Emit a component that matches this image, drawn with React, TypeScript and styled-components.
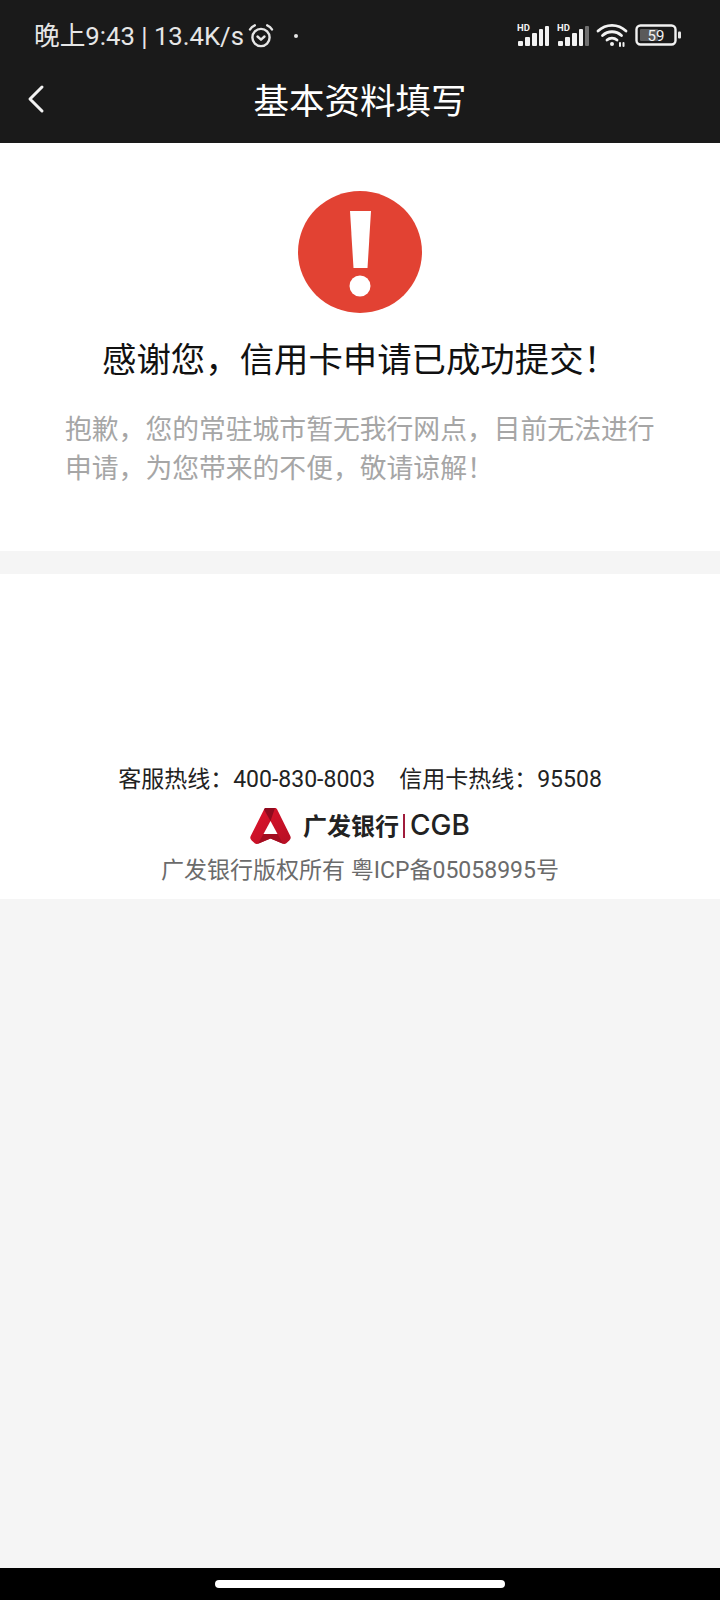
import React from 'react';
import styled, { createGlobalStyle } from 'styled-components';

const GlobalStyle = createGlobalStyle`
  html, body {
    margin: 0;
    padding: 0;
    background: #f5f5f5;
  }
  * {
    box-sizing: border-box;
  }
`;

const Page = styled.div`
  width: 720px;
  height: 1600px;
  display: flex;
  flex-direction: column;
  background: #f5f5f5;
  font-family: 'Roboto', 'Noto Sans CJK SC', sans-serif;
`;

const Header = styled.header`
  height: 143px;
  flex: none;
  background: #1a1a1a;
  color: #f2f2f2;
`;

const StatusBar = styled.div`
  height: 71px;
  display: flex;
  align-items: center;
  justify-content: space-between;
  padding: 0 39px 0 34px;
`;

const StatusLeft = styled.div`
  display: flex;
  align-items: center;
  font-size: 25.7px;
  line-height: 30px;
  color: #e6e6e6;
  white-space: nowrap;
`;

const AlarmWrap = styled.span`
  display: flex;
  margin-left: 4px;
`;

const Dot = styled.span`
  width: 4px;
  height: 4px;
  border-radius: 50%;
  background: #e6e6e6;
  margin-left: 20px;
`;

const StatusRight = styled.div`
  display: flex;
  align-items: center;
  gap: 7px;
  margin-bottom: 2px;
`;

const SignalPair = styled.div`
  display: flex;
  gap: 8px;
`;

const NavRow = styled.div`
  position: relative;
  height: 56px;
  display: flex;
  align-items: center;
  justify-content: center;
`;

const BackButton = styled.span`
  position: absolute;
  left: 26px;
  top: 12px;
  display: flex;
`;

const Title = styled.h1`
  margin: 0;
  font-size: 35.5px;
  line-height: 56px;
  font-weight: 400;
  color: #ffffff;
  font-family: 'Noto Sans CJK SC', sans-serif;
`;

const Result = styled.section`
  height: 408px;
  flex: none;
  background: #ffffff;
  display: flex;
  flex-direction: column;
  align-items: center;
  padding-top: 48px;
`;

const ResultTitle = styled.h2`
  margin: 20px 0 0;
  font-size: 34.4px;
  line-height: 48px;
  font-weight: 400;
  color: #111111;
  font-family: 'Noto Sans CJK SC', sans-serif;
  white-space: nowrap;
`;

const ResultText = styled.p`
  margin: 27px 0 0;
  width: 590px;
  font-size: 26.8px;
  line-height: 39px;
  color: #a6a6a6;
  font-family: 'Noto Sans CJK SC', sans-serif;
`;

const Footer = styled.footer`
  margin-top: 23px;
  height: 325px;
  flex: none;
  background: #ffffff;
  display: flex;
  flex-direction: column;
  align-items: center;
  justify-content: flex-end;
  padding-bottom: 11px;
`;

const Hotlines = styled.div`
  display: flex;
  gap: 24px;
  font-size: 23px;
  line-height: 34px;
  color: #222222;
  white-space: nowrap;
`;

const Brand = styled.div`
  display: flex;
  align-items: center;
  height: 42px;
  margin-top: 8px;
`;

const BrandName = styled.span`
  margin: -4px 0 0 12px;
  font-size: 24px;
  font-weight: 700;
  color: #222222;
  font-family: 'Noto Sans CJK SC', sans-serif;
`;

const BrandRule = styled.span`
  width: 2px;
  height: 24px;
  margin: 0 5px 0 4px;
  background: #a01c3c;
`;

const BrandCode = styled.span`
  margin-top: -3px;
  font-size: 28px;
  font-weight: 500;
  color: #222222;
  font-family: 'Inter', sans-serif;
`;

const Copyright = styled.div`
  margin-top: 7px;
  font-size: 23px;
  line-height: 34px;
  color: #6b6b6b;
  white-space: nowrap;
`;

const Spacer = styled.div`
  flex: 1;
`;

const HomeBar = styled.div`
  height: 32px;
  flex: none;
  background: #000000;
  display: flex;
  justify-content: center;
  padding-top: 12px;
`;

const HomePill = styled.span`
  width: 290px;
  height: 8px;
  border-radius: 4px;
  background: #ffffff;
`;

const AlarmIcon = () => (
  <svg width="26" height="26" viewBox="0 0 26 26" fill="none" stroke="#e6e6e6" strokeWidth="2.4" strokeLinecap="round" strokeLinejoin="round">
    <circle cx="13" cy="14.5" r="8.6" />
    <path d="M9.5 13.5l3.5 3.2 3.5-3.2" />
    <path d="M2 6.5c1-2 2.6-3.4 4.8-4.2M24 6.5c-1-2-2.6-3.4-4.8-4.2" />
  </svg>
);

const SignalIcon = ({ dim }: { dim?: boolean }) => (
  <svg width="32" height="24" viewBox="0 0 32 24" fill="#f2f2f2">
    <text x="0" y="8" fontSize="9.5" fontWeight="700" fontFamily="Roboto, sans-serif">HD</text>
    <rect x="1" y="18" width="5" height="5" rx="1" />
    <rect x="8" y="14" width="5" height="9" rx="1" />
    <rect x="15" y="10" width="5" height="13" rx="1" />
    <rect x="22" y="6" width="4" height="17" rx="1" />
    <rect x="28" y="3" width="4" height="20" rx="1" opacity={dim ? 0.4 : 1} />
  </svg>
);

const WifiIcon = () => (
  <svg width="32" height="24" viewBox="0 0 32 24" fill="none" stroke="#f2f2f2" strokeWidth="2.8" strokeLinecap="round">
    <path d="M2 8c8-7.5 20-7.500 28 0" />
    <path d="M6.500 12.500c5.500-5 13.500-5 19 0" />
    <path d="M11 17c2.800-2.500 7.200-2.500 10 0" />
    <circle cx="16" cy="21" r="2" fill="#f2f2f2" stroke="none" />
    <path d="M24 20v3M27.500 20v3" strokeWidth="2" />
  </svg>
);

const BatteryIcon = () => (
  <svg width="46" height="22" viewBox="0 0 46 22">
    <rect x="1.500" y="1.500" width="39" height="19" rx="4" fill="none" stroke="#f2f2f2" strokeWidth="2.400" />
    <rect x="5" y="5" width="18" height="12" rx="1" fill="#5a5a5a" />
    <rect x="43" y="7.500" width="3" height="7" rx="1" fill="#e6e6e6" />
    <text x="21" y="16.500" fontSize="15" textAnchor="middle" fill="#f2f2f2" fontFamily="Roboto, sans-serif">59</text>
  </svg>
);

const BackIcon = () => (
  <svg width="20" height="32" viewBox="0 0 20 32" fill="none" stroke="#f2f2f2" strokeWidth="3" strokeLinecap="round" strokeLinejoin="round">
    <path d="M16 4L4 16l12 12" />
  </svg>
);

const WarningIcon = () => (
  <svg width="124" height="122" viewBox="0 0 124 122">
    <ellipse cx="62" cy="61" rx="62" ry="61" fill="#e24233" />
    <path d="M52 20h21l-3.500 57h-14z" fill="#ffffff" />
    <circle cx="62" cy="95" r="10.500" fill="#ffffff" />
  </svg>
);

const BankLogo = () => (
  <svg width="41" height="36" viewBox="0 0 41 36">
    <defs>
      <linearGradient id="cgbBody" x1="0" y1="0" x2="1" y2="1">
        <stop offset="0" stopColor="#e0142c" />
        <stop offset="1" stopColor="#b50f24" />
      </linearGradient>
    </defs>
    <path d="M14 1.500c.5-1 1-1.500 2-1.500h9c1 0 1.700.5 2.200 1.500L40.300 28c.8 1.800.5 3-1 4.500L36 35.500c-1 .7-2 .5-3 .2L20.500 30.500 8 35.700c-1 .3-2 .5-3-.2l-3.300-3c-1.500-1.500-1.800-2.700-1-4.500z" fill="url(#cgbBody)" />
    <path d="M20.500 13l7 13H13.500z" fill="#ffffff" />
    <path d="M14 1.500c.5-1 1-1.500 2-1.500h9l-4.500 13z" fill="#8e0b1e" />
    <path d="M13.500 26H27.500l5.500 9.700L20.500 30.500 8 35.700z" fill="#a30d20" />
  </svg>
);

const App = () => (
  <Page>
    <GlobalStyle />
    <Header>
      <StatusBar>
        <StatusLeft>
          晚上9:43 | 13.4K/s
          <AlarmWrap>
            <AlarmIcon />
          </AlarmWrap>
          <Dot />
        </StatusLeft>
        <StatusRight>
          <SignalPair>
            <SignalIcon />
            <SignalIcon dim />
          </SignalPair>
          <WifiIcon />
          <BatteryIcon />
        </StatusRight>
      </StatusBar>
      <NavRow>
        <BackButton>
          <BackIcon />
        </BackButton>
        <Title>基本资料填写</Title>
      </NavRow>
    </Header>
    <Result>
      <WarningIcon />
      <ResultTitle>感谢您，信用卡申请已成功提交！</ResultTitle>
      <ResultText>抱歉，您的常驻城市暂无我行网点，目前无法进行申请，为您带来的不便，敬请谅解！</ResultText>
    </Result>
    <Footer>
      <Hotlines>
        <span>客服热线：400-830-8003</span>
        <span>信用卡热线：95508</span>
      </Hotlines>
      <Brand>
        <BankLogo />
        <BrandName>广发银行</BrandName>
        <BrandRule />
        <BrandCode>CGB</BrandCode>
      </Brand>
      <Copyright>广发银行版权所有 粤ICP备05058995号</Copyright>
    </Footer>
    <Spacer />
    <HomeBar>
      <HomePill />
    </HomeBar>
  </Page>
);

export default App;
